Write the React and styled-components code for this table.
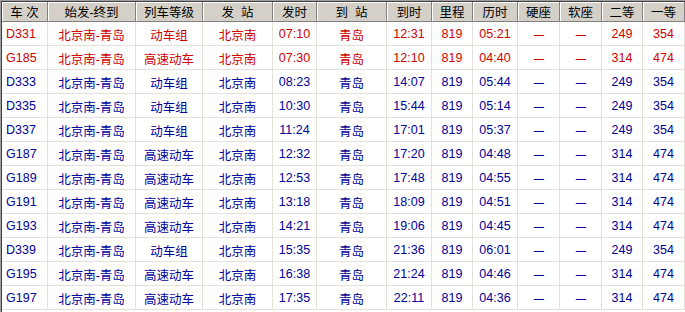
import React from 'react'
import styled, {createGlobalStyle} from 'styled-components'

const GlobalStyle = createGlobalStyle`
body{
margin: 0;
background: #fff;
font-family: "Liberation Sans", "Noto Sans CJK SC", sans-serif;
}
`;

const cols = '46px 88px 67px 70px 44px 70px 45px 41px 45px 42px 42px 41px 42px';

const Frame = styled.div`
width: 685px;
height: 312px;
box-sizing: border-box;
border-top: 1px solid #a0a0a0;
border-left: 1px solid #a0a0a0;
overflow: hidden;
`;
const Inner = styled.div`
height: 100%;
border-top: 1px solid #404040;
border-left: 1px solid #404040;
`;
const Row = styled.div`
display: grid;
grid-template-columns: ${cols};
height: ${p => p.$head ? '20px' : '24px'};
`;
const HeadCell = styled.div`
box-sizing: border-box;
display: flex;
align-items: center;
justify-content: center;
background: #d4d0c8;
color: #000;
font-size: 12.5px;
white-space: pre;
border-right: 1px solid #808080;
border-bottom: 1px solid #808080;
box-shadow: inset 1px 1px 0 #fff;
`;
const Cell = styled.div`
box-sizing: border-box;
display: flex;
align-items: center;
justify-content: ${p => p.$left ? 'flex-start' : 'center'};
padding-left: ${p => p.$left ? '4px' : '0'};
padding-top: 1px;
font-size: 12.5px;
color: ${p => p.$red ? '#d00000' : '#000099'};
border-right: 1px solid #e4e2d8;
border-bottom: 1px solid #e4e2d8;
white-space: nowrap;
`;
const Dash = styled.span`
font-size: 14px;
transform: scaleX(1.3);
`;

const heads = ['车 次', '始发-终到', '列车等级', '发  站', '发时', '到  站', '到时', '里程', '历时', '硬座', '软座', '二等', '一等'];

const trains = [
    ['D331', '动车组', '07:10', '12:31', '05:21', '249', '354', true],
    ['G185', '高速动车', '07:30', '12:10', '04:40', '314', '474', true],
    ['D333', '动车组', '08:23', '14:07', '05:44', '249', '354'],
    ['D335', '动车组', '10:30', '15:44', '05:14', '249', '354'],
    ['D337', '动车组', '11:24', '17:01', '05:37', '249', '354'],
    ['G187', '高速动车', '12:32', '17:20', '04:48', '314', '474'],
    ['G189', '高速动车', '12:53', '17:48', '04:55', '314', '474'],
    ['G191', '高速动车', '13:18', '18:09', '04:51', '314', '474'],
    ['G193', '高速动车', '14:21', '19:06', '04:45', '314', '474'],
    ['D339', '动车组', '15:35', '21:36', '06:01', '249', '354'],
    ['G195', '高速动车', '16:38', '21:24', '04:46', '314', '474'],
    ['G197', '高速动车', '17:35', '22:11', '04:36', '314', '474'],
];

const App = () => {
    return (
        <Frame>
            <GlobalStyle/>
            <Inner>
                <Row $head>
                    {heads.map(h => <HeadCell key={h}>{h}</HeadCell>)}
                </Row>
                {trains.map(([no, type, dep, arr, dur, second, first, red]) => {
                    const values = [no, '北京南-青岛', type, '北京南', dep, '青岛', arr, '819', dur, <Dash>–</Dash>, <Dash>–</Dash>, second, first];
                    return (
                        <Row key={no}>
                            {values.map((v, i) => <Cell key={i} $left={i === 0} $red={red}>{v}</Cell>)}
                        </Row>
                    )
                })}
            </Inner>
        </Frame>
    )
}

export default App
